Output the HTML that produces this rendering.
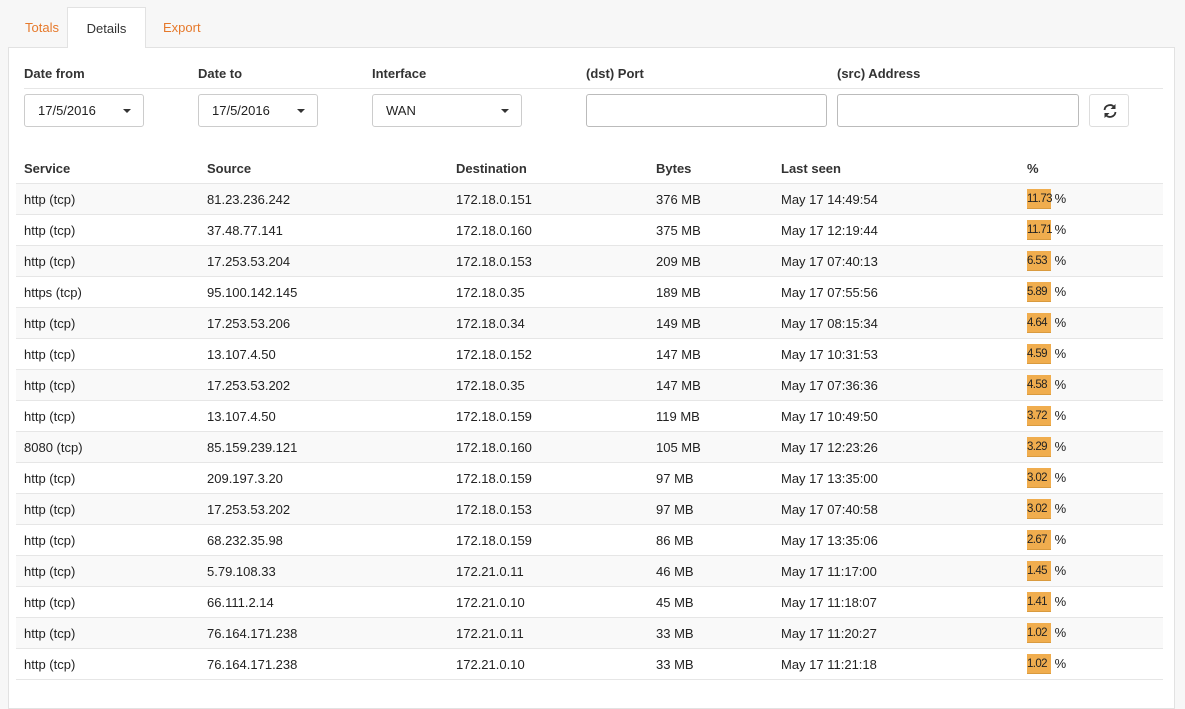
<!DOCTYPE html><html><head><style>
body{margin:0;background:#f7f7f7;font-family:"Liberation Sans",sans-serif;font-size:13px;color:#222;width:1185px;height:686px;overflow:hidden;position:relative}
.a{position:absolute}
.tab{position:absolute;top:8px;height:40px;line-height:40px;font-size:13px}
.panel{position:absolute;left:8px;top:47px;width:1165px;height:660px;background:#fff;border:1px solid #e2e2e2}
.lbl{position:absolute;top:66px;font-weight:bold;font-size:13px;color:#333}
.inp{position:absolute;top:94px;height:33px;border:1px solid #ccc;border-radius:3px;background:#fff;box-sizing:border-box;line-height:32px;padding-left:13px}
.car{position:absolute;right:12px;top:14px;width:0;height:0;border-left:4px solid transparent;border-right:4px solid transparent;border-top:4px solid #333}
.row{position:absolute;left:16px;width:1147px;height:30px;border-bottom:1px solid #e6e6e6;line-height:32px}
.row span{position:absolute}
.bar{background:#f0ad4e;border-bottom:1px solid #d99a3e;box-sizing:border-box;display:inline-block;width:24px;height:20px;line-height:20px;margin-top:5px;font-size:11.5px;letter-spacing:-0.6px;white-space:nowrap;vertical-align:top;overflow:visible}
</style></head><body>
<div class="panel"></div>
<div class="tab" style="left:25px;color:#e6792b">Totals</div>
<div class="tab" style="left:67px;top:7px;width:79px;height:41px;line-height:42px;background:#fff;border:1px solid #e2e2e2;border-bottom:none;box-sizing:border-box;text-align:center;color:#333">Details</div>
<div class="tab" style="left:163px;color:#e6792b">Export</div>
<div class="lbl" style="left:24px">Date from</div>
<div class="lbl" style="left:198px">Date to</div>
<div class="lbl" style="left:372px">Interface</div>
<div class="lbl" style="left:586px">(dst) Port</div>
<div class="lbl" style="left:837px">(src) Address</div>
<div class="a" style="left:24px;top:88px;width:1139px;height:1px;background:#e6e6e6"></div>
<div class="inp" style="left:24px;width:120px">17/5/2016<div class="car"></div></div>
<div class="inp" style="left:198px;width:120px">17/5/2016<div class="car"></div></div>
<div class="inp" style="left:372px;width:150px">WAN<div class="car"></div></div>
<div class="inp" style="left:586px;width:241px;border-color:#bbb"></div>
<div class="inp" style="left:837px;width:242px;border-color:#bbb"></div>
<div class="inp" style="left:1089px;width:40px;padding:0;border-color:#ddd"><svg width="40" height="32" viewBox="0 0 40 32"><g fill="none" stroke="#333" stroke-width="1.8"><path d="M14.5 15a5.5 5.5 0 0 1 10-2.5"/><path d="M25.5 17a5.5 5.5 0 0 1-10 2.5"/></g><path d="M25.5 9v5h-5z M14.5 23v-5h5z" fill="#333"/></svg></div>
<div class="row" style="top:153px;font-weight:bold;color:#333"><span style="left:8px">Service</span><span style="left:191px">Source</span><span style="left:440px">Destination</span><span style="left:640px">Bytes</span><span style="left:765px">Last seen</span><span style="left:1011px">%</span></div>
<div id="r"></div>
<script>
var d=[["http (tcp)","81.23.236.242","172.18.0.151","376 MB","May 17 14:49:54","11.73"],
["http (tcp)","37.48.77.141","172.18.0.160","375 MB","May 17 12:19:44","11.71"],
["http (tcp)","17.253.53.204","172.18.0.153","209 MB","May 17 07:40:13","6.53"],
["https (tcp)","95.100.142.145","172.18.0.35","189 MB","May 17 07:55:56","5.89"],
["http (tcp)","17.253.53.206","172.18.0.34","149 MB","May 17 08:15:34","4.64"],
["http (tcp)","13.107.4.50","172.18.0.152","147 MB","May 17 10:31:53","4.59"],
["http (tcp)","17.253.53.202","172.18.0.35","147 MB","May 17 07:36:36","4.58"],
["http (tcp)","13.107.4.50","172.18.0.159","119 MB","May 17 10:49:50","3.72"],
["8080 (tcp)","85.159.239.121","172.18.0.160","105 MB","May 17 12:23:26","3.29"],
["http (tcp)","209.197.3.20","172.18.0.159","97 MB","May 17 13:35:00","3.02"],
["http (tcp)","17.253.53.202","172.18.0.153","97 MB","May 17 07:40:58","3.02"],
["http (tcp)","68.232.35.98","172.18.0.159","86 MB","May 17 13:35:06","2.67"],
["http (tcp)","5.79.108.33","172.21.0.11","46 MB","May 17 11:17:00","1.45"],
["http (tcp)","66.111.2.14","172.21.0.10","45 MB","May 17 11:18:07","1.41"],
["http (tcp)","76.164.171.238","172.21.0.11","33 MB","May 17 11:20:27","1.02"],
["http (tcp)","76.164.171.238","172.21.0.10","33 MB","May 17 11:21:18","1.02"]];
var h="";d.forEach(function(r,i){h+='<div class="row" style="top:'+(184+31*i)+'px;background:'+(i%2?'#fff':'#f9f9f9')+'"><span style="left:8px">'+r[0]+'</span><span style="left:191px">'+r[1]+'</span><span style="left:440px">'+r[2]+'</span><span style="left:640px">'+r[3]+'</span><span style="left:765px">'+r[4]+'</span><span style="left:1011px;line-height:30px"><span class="bar" style="position:static">'+r[5]+'</span> %</span></div>';});
document.getElementById("r").innerHTML=h;
</script>
</body></html>
